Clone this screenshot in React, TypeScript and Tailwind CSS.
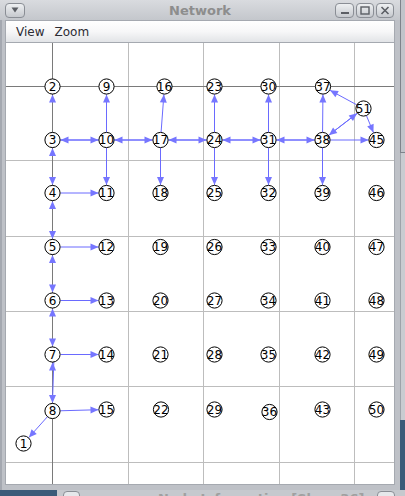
import React from 'react';

// node centers in page pixels
const nodes: Record<number, [number, number]> = {
  1: [23, 443],
  2: [52, 86], 3: [52, 139.5], 4: [52, 192.5], 5: [52, 246.5], 6: [52, 300], 7: [52, 354], 8: [52, 410.5],
  9: [106, 86], 10: [106, 139.5], 11: [106, 192.5], 12: [106, 246.5], 13: [106, 300], 14: [106, 354], 15: [106, 409],
  16: [164, 86], 17: [160, 139.5], 18: [160, 192.5], 19: [160, 246.5], 20: [160, 300], 21: [160, 354], 22: [160.5, 409],
  23: [214, 86], 24: [214, 139.5], 25: [214, 192.5], 26: [214, 246.5], 27: [214, 300], 28: [214, 354], 29: [214, 409],
  30: [268, 86], 31: [268, 139.5], 32: [268, 192.5], 33: [268, 246.5], 34: [268, 300], 35: [268, 354], 36: [269, 411.5],
  37: [322.5, 86], 38: [322, 139.5], 39: [322, 192.5], 40: [322, 246.5], 41: [322, 300], 42: [322, 354], 43: [322, 409],
  45: [376, 139.5], 46: [376, 192.5], 47: [376, 246.5], 48: [376, 300], 49: [376, 354], 50: [376, 409],
  51: [363, 108],
};

const edges: [number, number][] = [
  [3, 2], [3, 4], [4, 3], [4, 5], [5, 4], [5, 6], [6, 5], [6, 7], [7, 6], [7, 8], [8, 7],
  [10, 3], [3, 10], [10, 9], [10, 11], [10, 17], [17, 10], [17, 16], [17, 18], [17, 24], [24, 17],
  [24, 23], [24, 25], [24, 31], [31, 24], [31, 30], [31, 32], [31, 38], [38, 31],
  [38, 37], [38, 39], [38, 45], [51, 37], [51, 38], [38, 51], [51, 45],
  [4, 11], [5, 12], [6, 13], [7, 14], [8, 15], [8, 1],
];

const R = 8;
const gridX = [128, 203, 279, 354];
const gridY = [160, 236, 311, 386, 462];

function pt(n: number): [number, number] {
  const [x, y] = nodes[n];
  return [x + 0.5, y + 0.5];
}

function Arrow({ from, to }: { from: number; to: number }) {
  const [x1, y1] = pt(from);
  const [x2, y2] = pt(to);
  const dx = x2 - x1;
  const dy = y2 - y1;
  const len = Math.hypot(dx, dy);
  const ux = dx / len;
  const uy = dy / len;
  const tx = x2 - ux * R;
  const ty = y2 - uy * R;
  const bx = tx - ux * 8;
  const by = ty - uy * 8;
  const px = -uy * 3.5;
  const py = ux * 3.5;
  return <polygon points={`${tx},${ty} ${bx + px},${by + py} ${bx - px},${by - py}`} fill="#7676ff" />;
}

function EdgeLine({ from, to }: { from: number; to: number }) {
  const [x1, y1] = pt(from);
  const [x2, y2] = pt(to);
  const dx = x2 - x1;
  const dy = y2 - y1;
  const len = Math.hypot(dx, dy);
  const ux = dx / len;
  const uy = dy / len;
  return (
    <line
      x1={x1 + ux * R}
      y1={y1 + uy * R}
      x2={x2 - ux * R}
      y2={y2 - uy * R}
      stroke="#6a6aff"
      strokeWidth={1}
    />
  );
}

function Graph() {
  return (
    <svg width={388} height={441} viewBox="6 43 388 441" className="block">
      <rect x={6} y={43} width={388} height={441} fill="#ffffff" />
      {gridX.map((x) => (
        <line key={'gx' + x} x1={x + 0.5} y1={43} x2={x + 0.5} y2={484} stroke="#bdbdbd" />
      ))}
      {gridY.map((y) => (
        <line key={'gy' + y} x1={6} y1={y + 0.5} x2={394} y2={y + 0.5} stroke="#bdbdbd" />
      ))}
      {edges.map(([a, b], i) => (
        <EdgeLine key={'e' + i} from={a} to={b} />
      ))}
      {/* axes */}
      <line x1={52.5} y1={43} x2={52.5} y2={484} stroke="#7a7a7a" />
      <line x1={6} y1={86.5} x2={394} y2={86.5} stroke="#7a7a7a" />
      <line x1={53.8} y1={362} x2={52.5} y2={402} stroke="#6a6aff" />
      {edges.map(([a, b], i) => (
        <Arrow key={'a' + i} from={a} to={b} />
      ))}
      {Object.entries(nodes).map(([id, [x, y]]) => (
        <g key={id}>
          <circle cx={x + 0.5} cy={y + 0.5} r={7.6} fill="#ffffff" stroke="#000000" strokeWidth={1} />
          <text
            x={x + 0.5}
            y={y + 4.8}
            textAnchor="middle"
            fontFamily="DejaVu Sans, sans-serif"
            fontSize={12}
            fill="#000000"
          >
            {id}
          </text>
        </g>
      ))}
    </svg>
  );
}

function TitleButton({ children, className = '' }: { children: React.ReactNode; className?: string }) {
  return (
    <div
      className={`h-[15px] rounded-[4px] border border-[#8a8e95] bg-gradient-to-b from-[#eef0f2] to-[#c6c9ce] flex items-center justify-center ${className}`}
    >
      {children}
    </div>
  );
}

function Window() {
  return (
    <div className="w-[400px] h-[490px] flex flex-col bg-[#bec1c7] border-l-[2px] border-[#a4a8b0]">
      {/* title bar */}
      <div className="h-[20px] grid grid-cols-[1fr_auto_1fr] items-center bg-gradient-to-b from-[#d9dbdf] to-[#c4c7cc] -ml-[2px]">
        <div className="flex pl-[5px]">
          <TitleButton className="w-[20px]">
            <svg width="8" height="6" viewBox="0 0 8 6">
              <polygon points="0.5,0.5 7.5,0.5 4,5.5" fill="#5b5e64" />
            </svg>
          </TitleButton>
        </div>
        <div className="text-[13px] font-bold text-[#8d8d8d] leading-none font-['DejaVu_Sans',sans-serif]">
          Network
        </div>
        <div className="flex justify-end gap-[2px] pr-[6px]">
          <TitleButton className="w-[19px]">
            <svg width="10" height="9" viewBox="0 0 10 9">
              <rect x="1" y="6" width="8" height="2" fill="#5b5e64" />
            </svg>
          </TitleButton>
          <TitleButton className="w-[18px]">
            <svg width="10" height="9" viewBox="0 0 10 9">
              <rect x="1" y="1" width="8" height="7" fill="none" stroke="#5b5e64" strokeWidth="1.4" />
            </svg>
          </TitleButton>
          <TitleButton className="w-[18px]">
            <svg width="10" height="9" viewBox="0 0 10 9">
              <path d="M1.5 1 L8.5 8 M8.5 1 L1.5 8" stroke="#5b5e64" strokeWidth="1.6" />
            </svg>
          </TitleButton>
        </div>
      </div>
      {/* menu bar */}
      <div className="h-[23px] ml-[3px] mr-[5px] border border-[#a5a9b0] bg-gradient-to-b from-[#ffffff] via-[#f7f7f8] to-[#e2e4e7] flex items-center gap-[10px] pl-[10px] text-[12px] text-[#2b2b33] font-['DejaVu_Sans',sans-serif]">
        <span>View</span>
        <span>Zoom</span>
      </div>
      {/* canvas */}
      <div className="ml-[3px] mr-[5px] border-x border-b border-[#a5a9b0] bg-white">
        <Graph />
      </div>
    </div>
  );
}

export default function App() {
  return (
    <div className="w-[405px] h-[496px] overflow-hidden flex flex-col bg-[#3b5b79]">
      <div className="flex h-[490px]">
        <Window />
        <div className="flex-1 flex flex-col">
          <div className="h-[153px] bg-[#c1c4ca] border-l border-b border-[#7e838b]" />
          <div className="h-[267px] bg-[#c9ccd1] border-l border-[#9ea3aa]" />
          <div className="flex-1 bg-[#3b5b79]" />
        </div>
      </div>
      <div className="flex h-[6px]">
        <div className="w-[57px] bg-[#3b5b79]" />
        <div className="flex-1 bg-[#c6c9ce] flex items-start overflow-hidden">
          <div className="ml-[6px] mt-[1px] w-[17px] h-[10px] rounded-[4px] border border-[#8a8e95] bg-[#e6e8eb]" />
          <div className="ml-[78px] mt-[2px] text-[13px] font-bold text-[#a0a0a0] leading-none whitespace-nowrap font-['DejaVu_Sans',sans-serif]">
            Node Information [Sh...: 36]
          </div>
          <div className="ml-auto mr-[10px] mt-[1px] w-[18px] h-[10px] rounded-[4px] border border-[#8a8e95] bg-[#e6e8eb]" />
        </div>
      </div>
    </div>
  );
}
